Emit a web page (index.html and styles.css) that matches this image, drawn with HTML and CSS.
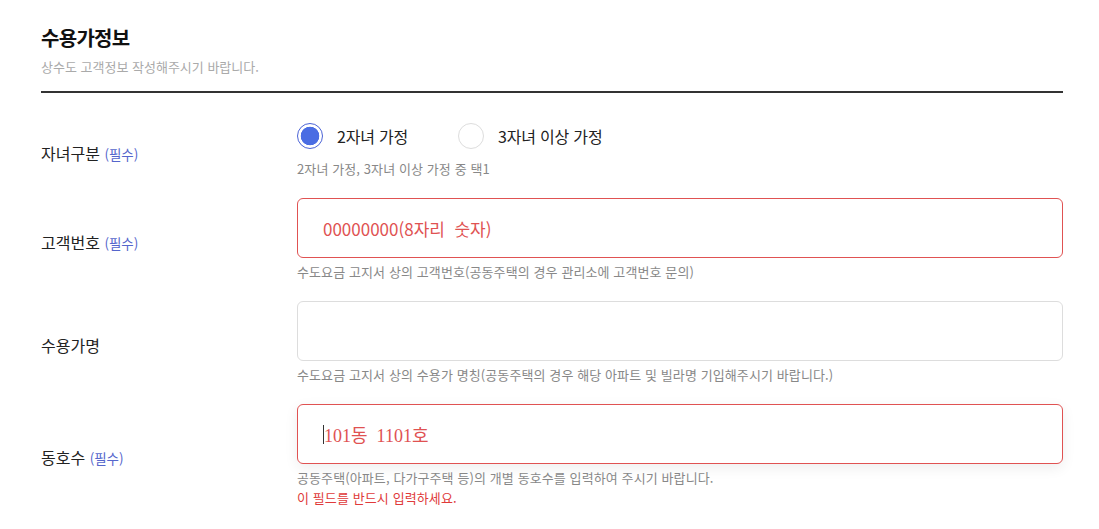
FILE: index.html
```html
<!DOCTYPE html>
<html lang="ko">
<head>
<meta charset="utf-8">
<link rel="stylesheet" href="styles.css">
</head>
<body>
<div class="wrap">
  <div class="head">
    <h2 class="title">수용가정보</h2>
    <p class="sub">상수도 고객정보 작성해주시기 바랍니다.</p>
  </div>
  <div class="rows">
    <div class="row">
      <div class="label">자녀구분 <span class="req">(필수)</span></div>
      <div class="field">
        <div class="radios">
          <label class="radio"><span class="dot on"></span>2자녀 가정</label>
          <label class="radio"><span class="dot"></span>3자녀 이상 가정</label>
        </div>
        <p class="hint hint-radio">2자녀 가정, 3자녀 이상 가정 중 택1</p>
      </div>
    </div>
    <div class="row">
      <div class="label">고객번호 <span class="req">(필수)</span></div>
      <div class="field">
        <div class="box err"><span class="ph">00000000(8자리&nbsp; 숫자)</span></div>
        <p class="hint">수도요금 고지서 상의 고객번호(공동주택의 경우 관리소에 고객번호 문의)</p>
      </div>
    </div>
    <div class="row">
      <div class="label">수용가명</div>
      <div class="field">
        <div class="box"></div>
        <p class="hint">수도요금 고지서 상의 수용가 명칭(공동주택의 경우 해당 아파트 및 빌라명 기입해주시기 바랍니다.)</p>
      </div>
    </div>
    <div class="row">
      <div class="label">동호수 <span class="req">(필수)</span></div>
      <div class="field">
        <div class="box err focus"><span class="caret"></span><span class="ph serif">101동&nbsp; 1101호</span></div>
        <p class="hint">공동주택(아파트, 다가구주택 등)의 개별 동호수를 입력하여 주시기 바랍니다.</p>
        <p class="errmsg">이 필드를 반드시 입력하세요.</p>
      </div>
    </div>
  </div>
</div>
</body>
</html>
```

FILE: styles.css
```css
* { box-sizing: border-box; }
html, body { margin: 0; padding: 0; background: #fff; }
body {
  font-family: "Noto Sans CJK KR", "Noto Sans", sans-serif;
  color: #222;
}
.wrap {
  width: 1022px;
  margin-left: 41px;
  padding-top: 24px;
}
.head {
  border-bottom: 2px solid #333;
  padding-bottom: 14px;
}
.title {
  margin: 0;
  font-size: 20px;
  line-height: 28px;
  font-weight: 700;
  color: #111;
  letter-spacing: -0.7px;
}
.sub {
  margin: 5px 0 0;
  font-size: 13px;
  line-height: 20px;
  color: #aaa;
}
.rows {
  padding-top: 30px;
  display: flex;
  flex-direction: column;
  gap: 19px;
}
.row {
  display: flex;
  align-items: center;
}
.label {
  width: 256px;
  flex: none;
  font-size: 16px;
  line-height: 22px;
  color: #222;
  padding-top: 4px;
}
.req {
  font-size: 13.5px;
  color: #5566cc;
}
.field { flex: 1; }
.radios {
  display: flex;
  height: 26px;
  align-items: center;
}
.radio {
  display: flex;
  align-items: center;
  font-size: 16px;
  color: #222;
  margin-right: 50px;
  letter-spacing: -0.2px;
}
.dot {
  width: 26px;
  height: 26px;
  border-radius: 50%;
  border: 1px solid #ddd;
  background: #fff;
  margin-right: 14px;
  flex: none;
}
.dot.on {
  border: 1px solid #4b63d6;
  background: radial-gradient(circle, #4a6de3 0 9px, #fff 9.6px);
}
.hint {
  margin: 4px 0 0;
  font-size: 13px;
  line-height: 20px;
  color: #888;
  letter-spacing: 0.1px;
}
.hint-radio { margin-top: 10px; }
.errmsg {
  margin: 0;
  font-size: 13px;
  line-height: 19px;
  color: #e03a3a;
  letter-spacing: 0.1px;
}
.box {
  height: 60px;
  border: 1px solid #ddd;
  border-radius: 6px;
  display: flex;
  align-items: center;
  padding-left: 25px;
  background: #fff;
}
.box.err { border-color: #e05252; }
.box.focus { box-shadow: 0 4px 14px rgba(0,0,0,0.07); }
.ph {
  font-size: 17px;
  color: #e05252;
}
.ph.serif {
  font-family: "Liberation Serif", "Noto Sans CJK KR", serif;
  font-size: 18px;
}
.caret {
  width: 1px;
  height: 19px;
  background: #333;
}
```
